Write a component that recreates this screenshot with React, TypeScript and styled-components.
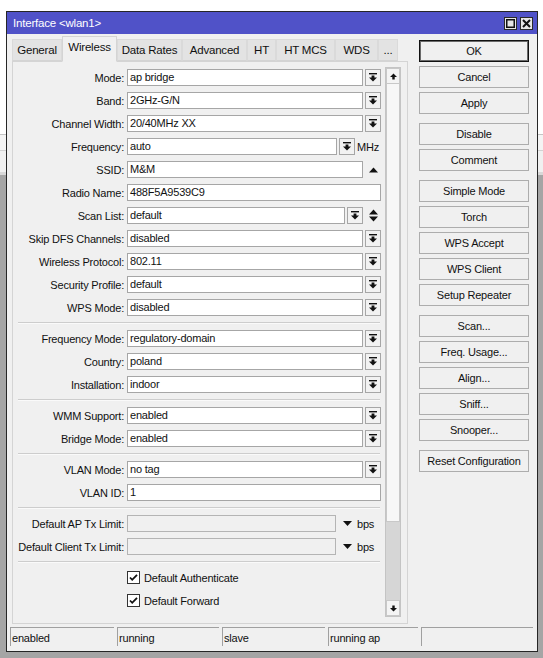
import React from 'react';
import styled, { createGlobalStyle } from 'styled-components';

const GlobalStyle = createGlobalStyle`
    html, body {
        margin: 0;
        height: 100%;
    }
    body {
        font-family: "Liberation Sans", Arial, sans-serif;
        font-size: 11px;
        letter-spacing: -0.2px;
        color: #111;
        background:
            linear-gradient(to bottom,
                #ffffff 0, #ffffff 134px,
                #c4c4c4 134px, #c4c4c4 135px,
                #f4f4f4 135px, #f4f4f4 150px,
                #d2d2d2 150px, #d2d2d2 151px,
                #f0f0f0 151px, #f0f0f0 172px,
                #d8d8d8 172px, #d8d8d8 175px,
                #a5a5a5 175px, #a5a5a5 100%);
    }
    #root {
        padding: 11px 0 0 6px;
    }
`;

const Window = styled.div`
    width: 532px;
    height: 641px;
    box-sizing: border-box;
    border: 1px solid #262626;
    background: #f0f0f0;
    display: flex;
    flex-direction: column;
`;

const TitleBar = styled.div`
    height: 22px;
    flex: none;
    background: #5052c8;
    color: #fff;
    display: flex;
    align-items: center;
    padding: 0 4px 0 6px;
    font-size: 11.5px;
`;

const TitleText = styled.span`
    flex: 1;
`;

const TitleButtons = styled.div`
    display: flex;
    gap: 3px;
`;

const TitleButton = styled.div`
    width: 13px;
    height: 13px;
    box-sizing: border-box;
    border: 1px solid #2a2a2a;
    background: #e6e6e6;
    display: flex;
    align-items: center;
    justify-content: center;
`;

const Body = styled.div`
    flex: 1;
    display: flex;
    flex-direction: column;
    padding: 2px 8px 0 5px;
`;

const Main = styled.div`
    display: flex;
    gap: 11px;
    height: 588px;
`;

const LeftCol = styled.div`
    width: 396px;
    display: flex;
    flex-direction: column;
`;

const TabStrip = styled.div`
    height: 25px;
    display: flex;
    align-items: flex-end;
    position: relative;
    z-index: 1;
`;

const Tab = styled.div<{ $active?: boolean; $width: number }>`
    box-sizing: border-box;
    width: ${(p) => p.$width}px;
    height: ${(p) => (p.$active ? 26 : 22)}px;
    margin-bottom: ${(p) => (p.$active ? -1 : 0)}px;
    padding-bottom: ${(p) => (p.$active ? 4 : 0)}px;
    display: flex;
    align-items: center;
    justify-content: center;
    border: 1px solid ${(p) => (p.$active ? '#d4d4d4' : '#dadada')};
    border-bottom-color: ${(p) => (p.$active ? '#f0f0f0' : '#d4d4d4')};
    background: ${(p) => (p.$active ? '#f0f0f0' : '#e3e3e3')};
    font-size: 11.5px;
    white-space: nowrap;
`;

const Panel = styled.div`
    flex: 1;
    box-sizing: border-box;
    border: 1px solid #d4d4d4;
    display: flex;
    gap: 4px;
    padding: 5px 6px 6px 0;
`;

const Form = styled.div`
    flex: 1;
    display: flex;
    flex-direction: column;
    gap: 6px;
    padding-top: 2px;
`;

const Row = styled.div`
    display: flex;
    height: 17px;
    align-items: center;
`;

const Label = styled.div`
    width: 111px;
    margin-right: 3px;
    text-align: right;
    white-space: nowrap;
`;

const Controls = styled.div`
    flex: 1;
    display: flex;
    gap: 2px;
    height: 17px;
`;

const Field = styled.div<{ $disabled?: boolean }>`
    flex: 1;
    box-sizing: border-box;
    height: 17px;
    border: 1px solid ${(p) => (p.$disabled ? '#b4b4b4' : '#a6a6a6')};
    background: ${(p) => (p.$disabled ? '#f0f0f0' : '#ffffff')};
    padding: 0 2px;
    line-height: 15px;
    white-space: nowrap;
    overflow: hidden;
`;

const DropButton = styled.div`
    width: 16px;
    flex: none;
    box-sizing: border-box;
    border: 1px solid #a6a6a6;
    background: #f2f2f2;
    display: flex;
    align-items: center;
    justify-content: center;
`;

const Suffix = styled.div<{ $width: number; $center?: boolean }>`
    width: ${(p) => p.$width}px;
    flex: none;
    display: flex;
    align-items: center;
    justify-content: ${(p) => (p.$center ? 'center' : 'flex-start')};
    gap: 5px;
    white-space: nowrap;
`;

const Separator = styled.div`
    height: 0;
    margin: 0 1px 0 5px;
    border-top: 1px solid #cdcdcd;
    border-bottom: 1px solid #fafafa;
`;

const CheckRow = styled.label`
    display: flex;
    align-items: center;
    height: 17px;
    gap: 4px;
    padding-left: 114px;
`;

const CheckBox = styled.span`
    width: 13px;
    height: 13px;
    box-sizing: border-box;
    border: 1px solid #333;
    background: #fff;
    display: flex;
    align-items: center;
    justify-content: center;
`;

const ScrollBar = styled.div`
    width: 16px;
    box-sizing: border-box;
    border: 1px solid #c4c4c4;
    display: flex;
    flex-direction: column;
    background: #d6d6d6;
`;

const ScrollButton = styled.div`
    height: 16px;
    flex: none;
    box-sizing: border-box;
    border: 1px solid #c8c8c8;
    background: #f4f4f4;
    display: flex;
    align-items: center;
    justify-content: center;
`;

const ScrollThumb = styled.div`
    height: 438px;
    flex: none;
    box-sizing: border-box;
    border: 1px solid #c8c8c8;
    border-top: none;
    background: #f7f7f7;
`;

const ScrollTrack = styled.div`
    flex: 1;
`;

const ButtonColumn = styled.div`
    width: 110px;
    padding-top: 4px;
    display: flex;
    flex-direction: column;
    gap: 4px;
`;

const ActionButton = styled.div<{ $default?: boolean; $groupStart?: boolean }>`
    height: 22px;
    box-sizing: border-box;
    border: 1px solid ${(p) => (p.$default ? '#111' : '#adadad')};
    box-shadow: ${(p) => (p.$default ? 'inset 0 0 0 1px #6a6a6a' : 'none')};
    background: #f0f0f0;
    margin-top: ${(p) => (p.$groupStart ? 5 : 0)}px;
    display: flex;
    align-items: center;
    justify-content: center;
    white-space: nowrap;
`;

const StatusBar = styled.div`
    margin: 3px -4px 0 -2px;
    height: 19px;
    display: grid;
    grid-template-columns: 104px 102px 103px 90px 1fr;
    gap: 3px;
`;

const StatusCell = styled.div`
    box-sizing: border-box;
    border-top: 1px solid #a0a0a0;
    border-left: 1px solid #a0a0a0;
    padding: 2px 0 0 1px;
    display: flex;
    align-items: center;
    white-space: nowrap;
`;

const DropGlyph = () => (
    <svg width="8" height="9" viewBox="0 0 8 9">
        <rect x="0" y="0" width="8" height="1.4" fill="#111" />
        <path d="M2.6 2.6h2.8v1.9H8L4 8.6 0 4.5h2.6z" fill="#111" />
    </svg>
);

const UpGlyph = () => (
    <svg width="9" height="6" viewBox="0 0 9 6">
        <path d="M0 5.5L4.5 0.5 9 5.5z" fill="#111" />
    </svg>
);

const UpDownGlyph = () => (
    <svg width="9" height="13" viewBox="0 0 9 13">
        <path d="M0 5.5L4.5 0.5 9 5.5zM0 7.5h9L4.5 12.5z" fill="#111" />
    </svg>
);

const DownTriangle = () => (
    <svg width="9" height="5" viewBox="0 0 9 5">
        <path d="M0 0h9L4.5 5z" fill="#111" />
    </svg>
);

const ScrollArrow = ({ down }: { down?: boolean }) => (
    <svg width="7" height="7" viewBox="0 0 7 7" style={down ? { transform: 'rotate(180deg)' } : undefined}>
        <path d="M3.5 0.5L7 4H4.7v2.5H2.3V4H0z" fill="#111" />
    </svg>
);

const CheckMark = () => (
    <svg width="9" height="9" viewBox="0 0 9 9">
        <path d="M1 4.5l2.2 2.3L8 1.8" fill="none" stroke="#111" strokeWidth="1.8" />
    </svg>
);

type FormRowProps = {
    label: string;
    value?: string;
    drop?: boolean;
    disabled?: boolean;
    suffix?: React.ReactNode;
    suffixWidth?: number;
    center?: boolean;
};

const FormRow: React.FC<FormRowProps> = ({ label, value = '', drop, disabled, suffix, suffixWidth = 0, center }) => (
    <Row>
        <Label>{label}:</Label>
        <Controls>
            <Field $disabled={disabled}>{value}</Field>
            {drop && (
                <DropButton>
                    <DropGlyph />
                </DropButton>
            )}
            {suffix && (
                <Suffix $width={suffixWidth} $center={center}>
                    {suffix}
                </Suffix>
            )}
        </Controls>
    </Row>
);

const txSuffix = (
    <>
        <span style={{ width: 0 }} />
        <DownTriangle />
        <span>bps</span>
    </>
);

const tabs: [string, number][] = [
    ['General', 50],
    ['Wireless', 55],
    ['Data Rates', 65],
    ['Advanced', 65],
    ['HT', 29],
    ['HT MCS', 59],
    ['WDS', 43],
    ['...', 20],
];

const buttons: { text: string; isDefault?: boolean; groupStart?: boolean }[] = [
    { text: 'OK', isDefault: true },
    { text: 'Cancel' },
    { text: 'Apply' },
    { text: 'Disable', groupStart: true },
    { text: 'Comment' },
    { text: 'Simple Mode', groupStart: true },
    { text: 'Torch' },
    { text: 'WPS Accept' },
    { text: 'WPS Client' },
    { text: 'Setup Repeater' },
    { text: 'Scan...', groupStart: true },
    { text: 'Freq. Usage...' },
    { text: 'Align...' },
    { text: 'Sniff...' },
    { text: 'Snooper...' },
    { text: 'Reset Configuration', groupStart: true },
];

const status = ['enabled', 'running', 'slave', 'running ap', ''];

export default function App() {
    return (
        <>
            <GlobalStyle />
            <Window>
                <TitleBar>
                    <TitleText>Interface &lt;wlan1&gt;</TitleText>
                    <TitleButtons>
                        <TitleButton>
                            <svg width="9" height="9" viewBox="0 0 9 9">
                                <rect x="0.75" y="0.75" width="7.5" height="7.5" fill="none" stroke="#111" strokeWidth="1.5" />
                            </svg>
                        </TitleButton>
                        <TitleButton>
                            <svg width="9" height="9" viewBox="0 0 9 9">
                                <path d="M1 1l7 7M8 1L1 8" stroke="#111" strokeWidth="2" />
                            </svg>
                        </TitleButton>
                    </TitleButtons>
                </TitleBar>
                <Body>
                    <Main>
                        <LeftCol>
                            <TabStrip>
                                {tabs.map(([t, w]) => (
                                    <Tab key={t} $width={w} $active={t === 'Wireless'}>
                                        {t}
                                    </Tab>
                                ))}
                            </TabStrip>
                            <Panel>
                                <Form>
                                    <FormRow label="Mode" value="ap bridge" drop />
                                    <FormRow label="Band" value="2GHz-G/N" drop />
                                    <FormRow label="Channel Width" value="20/40MHz XX" drop />
                                    <FormRow label="Frequency" value="auto" drop suffix="MHz" suffixWidth={24} />
                                    <FormRow label="SSID" value="M&M" suffix={<UpGlyph />} suffixWidth={16} center />
                                    <FormRow label="Radio Name" value="488F5A9539C9" />
                                    <FormRow label="Scan List" value="default" drop suffix={<UpDownGlyph />} suffixWidth={16} center />
                                    <FormRow label="Skip DFS Channels" value="disabled" drop />
                                    <FormRow label="Wireless Protocol" value="802.11" drop />
                                    <FormRow label="Security Profile" value="default" drop />
                                    <FormRow label="WPS Mode" value="disabled" drop />
                                    <Separator />
                                    <FormRow label="Frequency Mode" value="regulatory-domain" drop />
                                    <FormRow label="Country" value="poland" drop />
                                    <FormRow label="Installation" value="indoor" drop />
                                    <Separator />
                                    <FormRow label="WMM Support" value="enabled" drop />
                                    <FormRow label="Bridge Mode" value="enabled" drop />
                                    <Separator />
                                    <FormRow label="VLAN Mode" value="no tag" drop />
                                    <FormRow label="VLAN ID" value="1" />
                                    <Separator />
                                    <FormRow label="Default AP Tx Limit" disabled suffix={txSuffix} suffixWidth={43} />
                                    <FormRow label="Default Client Tx Limit" disabled suffix={txSuffix} suffixWidth={43} />
                                    <Separator />
                                    <CheckRow>
                                        <CheckBox>
                                            <CheckMark />
                                        </CheckBox>
                                        Default Authenticate
                                    </CheckRow>
                                    <CheckRow>
                                        <CheckBox>
                                            <CheckMark />
                                        </CheckBox>
                                        Default Forward
                                    </CheckRow>
                                </Form>
                                <ScrollBar>
                                    <ScrollButton>
                                        <ScrollArrow />
                                    </ScrollButton>
                                    <ScrollThumb />
                                    <ScrollTrack />
                                    <ScrollButton>
                                        <ScrollArrow down />
                                    </ScrollButton>
                                </ScrollBar>
                            </Panel>
                        </LeftCol>
                        <ButtonColumn>
                            {buttons.map((b) => (
                                <ActionButton key={b.text} $default={b.isDefault} $groupStart={b.groupStart}>
                                    {b.text}
                                </ActionButton>
                            ))}
                        </ButtonColumn>
                    </Main>
                    <StatusBar>
                        {status.map((s, i) => (
                            <StatusCell key={i}>{s}</StatusCell>
                        ))}
                    </StatusBar>
                </Body>
            </Window>
        </>
    );
}
